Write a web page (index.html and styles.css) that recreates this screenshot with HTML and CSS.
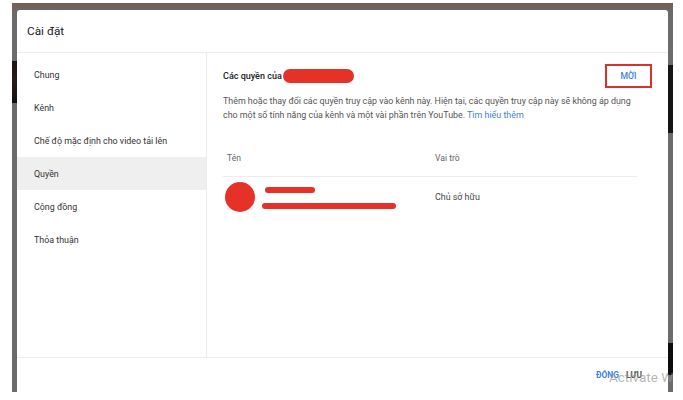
FILE: index.html
```html
<!DOCTYPE html>
<html lang="vi">
<head>
<meta charset="utf-8">
<link rel="stylesheet" href="styles.css">
</head>
<body>
<div class="backdrop">
  <div class="dialog">
    <header class="dlg-head">Cài đặt</header>
    <div class="dlg-body">
      <nav class="side">
        <div class="side-item">Chung</div>
        <div class="side-item">Kênh</div>
        <div class="side-item">Chế độ mặc định cho video tải lên</div>
        <div class="side-item active">Quyền</div>
        <div class="side-item">Cộng đồng</div>
        <div class="side-item">Thỏa thuận</div>
      </nav>
      <main class="content">
        <div class="title-row">
          <div class="title">Các quyền của<span class="redact-pill"></span></div>
          <div class="invite">MỜI</div>
        </div>
        <p class="desc">Thêm hoặc thay đổi các quyền truy cập vào kênh này. Hiện tại, các quyền truy cập này sẽ không áp dụng cho một số tính năng của kênh và một vài phần trên YouTube. <span class="link">Tìm hiểu thêm</span></p>
        <div class="table">
          <div class="thead">
            <div class="col-name">Tên</div>
            <div class="col-role">Vai trò</div>
          </div>
          <div class="trow">
            <div class="col-name user">
              <span class="avatar"></span>
              <span class="lines">
                <span class="bar bar1"></span>
                <span class="bar bar2"></span>
              </span>
            </div>
            <div class="col-role">Chủ sở hữu</div>
          </div>
        </div>
      </main>
    </div>
    <footer class="dlg-foot">
      <span class="btn primary">ĐÓNG</span>
      <span class="btn">LƯU</span>
    </footer>
  </div>
</div>
<div class="watermark">Activate W</div>
</body>
</html>
```

FILE: styles.css
```css
html, body {
  margin: 0;
  padding: 0;
  background: #ffffff;
  font-family: Roboto, "Noto Sans", "Liberation Sans", sans-serif;
}

body {
  position: relative;
  width: 683px;
  height: 400px;
  overflow: hidden;
}

.backdrop {
  margin: 3px 0 0 12px;
  width: 661px;
  height: 389px;
  box-sizing: border-box;
  padding: 7px 5px 0 5px;
  display: flex;
  background:
    linear-gradient(to bottom, transparent 58px, #1c1414 58px, #2a1c18 78px, #111 100px, transparent 100px) left top / 5px 100% no-repeat,
    linear-gradient(to bottom, transparent 62px, #151515 62px, #151515 130px, transparent 130px, transparent 340px, #0c0c0c 340px, #0c0c0c 372px, transparent 372px) right top / 5px 100% no-repeat,
    linear-gradient(to bottom, #7a5a55 0, #6e6663 7px) top / 100% 7px no-repeat,
    #6b6b6b;
}

.dialog {
  flex: 1;
  min-width: 0;
  background: #fff;
  border-radius: 3px 3px 0 0;
  display: flex;
  flex-direction: column;
  overflow: hidden;
}

.dlg-head {
  height: 43px;
  box-sizing: border-box;
  padding: 0 10px;
  display: flex;
  align-items: center;
  font-size: 11.8px;
  color: #222;
  border-bottom: 1px solid #ececec;
}

.dlg-body {
  display: flex;
  height: 304px;
  border-bottom: 1px solid #ececec;
}

.side {
  flex: none;
  width: 190px;
  border-right: 1px solid #ececec;
  padding-top: 5px;
  box-sizing: border-box;
}

.side-item {
  height: 33px;
  display: flex;
  align-items: center;
  padding-left: 17px;
  font-size: 8.9px;
  color: #333;
}

.side-item.active {
  background: #efefef;
}

.content {
  flex: 1;
  min-width: 0;
  padding: 11px 16px 0 16px;
}

.title-row {
  display: flex;
  justify-content: space-between;
  align-items: center;
  height: 24px;
}

.title {
  display: flex;
  align-items: center;
  font-size: 9px;
  font-weight: 500;
  color: #222;
}

.redact-pill {
  display: inline-block;
  width: 71px;
  height: 14px;
  border-radius: 7px;
  background: #e53127;
  margin-left: 1px;
}

.invite {
  width: 43px;
  height: 20px;
  border: 2px solid #d9322c;
  display: flex;
  align-items: center;
  justify-content: center;
  font-size: 8.6px;
  font-weight: 500;
  color: #3f7fe0;
}

.desc {
  margin: 6px 0 0 0;
  font-size: 8.9px;
  line-height: 14px;
  color: #555;
  width: 416px;
}

.link {
  color: #3f7fe0;
}

.table {
  margin-top: 18px;
  width: 414px;
}

.thead {
  display: flex;
  height: 36px;
  align-items: center;
  font-size: 8.6px;
  color: #666;
  border-bottom: 1px solid #ececec;
}

.trow {
  display: flex;
  align-items: center;
  height: 40px;
  font-size: 8.9px;
  color: #444;
}

.col-name {
  width: 212px;
  padding-left: 4px;
  box-sizing: border-box;
}

.user {
  display: flex;
  align-items: center;
  padding-left: 2px;
}

.avatar {
  width: 30px;
  height: 30px;
  border-radius: 50%;
  background: #e53127;
  flex: none;
}

.lines {
  display: flex;
  flex-direction: column;
  margin-left: 7px;
  gap: 10px;
  padding-top: 2px;
}

.bar {
  display: block;
  height: 6px;
  border-radius: 3px;
  background: #e53127;
}

.bar1 {
  width: 50px;
  margin-left: 3px;
}

.bar2 {
  width: 134px;
}

.dlg-foot {
  flex: 1;
  display: flex;
  justify-content: flex-end;
  align-items: center;
  gap: 7px;
  padding-right: 26px;
}

.btn {
  font-size: 8.4px;
  font-weight: 700;
  color: #555;
}

.btn.primary {
  color: #3f7fe0;
}

.watermark {
  position: absolute;
  left: 609px;
  top: 369px;
  font-size: 13.5px;
  color: rgba(150, 150, 150, 0.7);
  white-space: nowrap;
}
```
